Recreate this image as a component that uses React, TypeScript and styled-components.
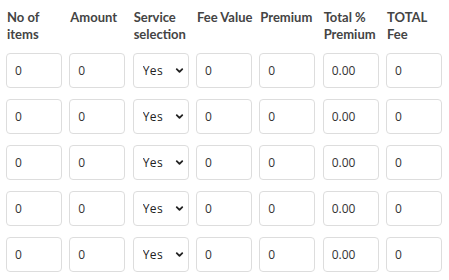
import styled, { createGlobalStyle } from 'styled-components';
import { ChevronDown } from 'lucide-react';

const GlobalStyle = createGlobalStyle`
  body {
    margin: 0;
    background: #fff;
  }
`;

const headers = [
  'No of items',
  'Amount',
  'Service selection',
  'Fee Value',
  'Premium',
  'Total % Premium',
  'TOTAL Fee',
];

const rows = [0, 1, 2, 3, 4];

function App() {
  return (
    <>
      <GlobalStyle />
      <StyledTable>
        <StyledHead>
          {headers.map((h) => (
            <StyledTh key={h}>{h}</StyledTh>
          ))}
        </StyledHead>
        {rows.map((r) => (
          <StyledRow key={r}>
            <StyledInput defaultValue="0" />
            <StyledInput defaultValue="0" />
            <StyledSelectWrap>
              <StyledSelect defaultValue="Yes">
                <option>Yes</option>
                <option>No</option>
              </StyledSelect>
              <StyledChevron size={11} strokeWidth={4} />
            </StyledSelectWrap>
            <StyledInput defaultValue="0" />
            <StyledInput defaultValue="0" />
            <StyledInput defaultValue="0.00" />
            <StyledInput defaultValue="0" />
          </StyledRow>
        ))}
      </StyledTable>
    </>
  );
}

const StyledTable = styled.div`
  padding: 0 6px;
  display: flex;
  flex-direction: column;
  row-gap: 11px;
`;

const StyledHead = styled.div`
  display: grid;
  grid-template-columns: repeat(7, 56px);
  column-gap: 7.33px;
  padding-top: 9px;
  margin-bottom: -2px;
  height: 44px;
  box-sizing: border-box;
`;

const StyledTh = styled.div`
  font-family: Lato, 'Liberation Sans', sans-serif;
  font-weight: 700;
  font-size: 13px;
  line-height: 17px;
  color: #444;
  padding-left: 1px;
  white-space: normal;
  width: 62px;
`;

const StyledRow = styled.div`
  display: grid;
  grid-template-columns: repeat(7, 56px);
  column-gap: 7.33px;
`;

const StyledInput = styled.input`
  width: 56px;
  height: 35px;
  box-sizing: border-box;
  border: 1px solid #ddd;
  border-radius: 4px;
  padding: 0 0 0 8px;
  font-family: 'Open Sans', 'Liberation Sans', sans-serif;
  font-size: 12px;
  color: #333;
  background: #fff;
  outline: none;
`;

const StyledSelectWrap = styled.div`
  position: relative;
  width: 56px;
  height: 35px;
`;

const StyledSelect = styled.select`
  appearance: none;
  width: 56px;
  height: 35px;
  box-sizing: border-box;
  border: 1px solid #ddd;
  border-radius: 4px;
  padding: 0 0 0 9px;
  font-family: 'Open Sans', 'Liberation Sans', sans-serif;
  font-size: 12px;
  letter-spacing: 0.5px;
  color: #222;
  background: #fff;
  outline: none;
`;

const StyledChevron = styled(ChevronDown)`
  position: absolute;
  right: 4px;
  top: 12px;
  color: #222;
  pointer-events: none;
`;

export default App;
